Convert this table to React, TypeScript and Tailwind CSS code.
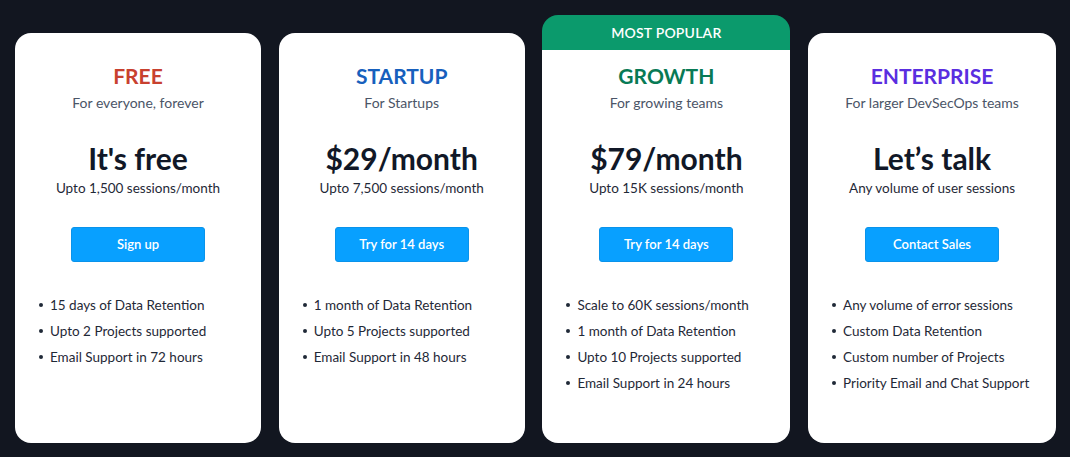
const plans = [
  {
    name: 'FREE',
    color: 'text-[#c8412f]',
    tagline: 'For everyone, forever',
    price: "It's free",
    sessions: 'Upto 1,500 sessions/month',
    cta: 'Sign up',
    features: ['15 days of Data Retention', 'Upto 2 Projects supported', 'Email Support in 72 hours'],
  },
  {
    name: 'STARTUP',
    color: 'text-[#1760bd]',
    tagline: 'For Startups',
    price: '$29/month',
    sessions: 'Upto 7,500 sessions/month',
    cta: 'Try for 14 days',
    features: ['1 month of Data Retention', 'Upto 5 Projects supported', 'Email Support in 48 hours'],
  },
  {
    name: 'GROWTH',
    color: 'text-[#087a55]',
    tagline: 'For growing teams',
    price: '$79/month',
    sessions: 'Upto 15K sessions/month',
    cta: 'Try for 14 days',
    popular: true,
    features: [
      'Scale to 60K sessions/month',
      '1 month of Data Retention',
      'Upto 10 Projects supported',
      'Email Support in 24 hours',
    ],
  },
  {
    name: 'ENTERPRISE',
    color: 'text-[#5a2ee0]',
    tagline: 'For larger DevSecOps teams',
    price: 'Let’s talk',
    sessions: 'Any volume of user sessions',
    cta: 'Contact Sales',
    features: [
      'Any volume of error sessions',
      'Custom Data Retention',
      'Custom number of Projects',
      'Priority Email and Chat Support',
    ],
  },
];

export default function App() {
  return (
    <div className="min-h-[457px] bg-[#121620] pt-[33px] pl-[15px] font-['Lato','Open_Sans',sans-serif]">
      <div className="grid grid-cols-[246px_246px_248px_248px] gap-[17.7px]">
        {plans.map((plan) => (
          <div key={plan.name} className="relative h-[410px] rounded-2xl bg-white">
            {plan.popular && (
              <div className="absolute left-0 right-0 top-[-18px] h-[35px] rounded-t-2xl bg-[#0b9a6c] flex items-center justify-center text-[14px] font-semibold text-white tracking-[0.2px]">
                MOST POPULAR
              </div>
            )}
            <div className="pt-[29px] flex flex-col items-center text-center">
              <div className={`text-[21px] leading-[28px] font-bold ${plan.color}`}>{plan.name}</div>
              <div className="mt-[3px] text-[14px] leading-[20px] text-[#4b5567]">{plan.tagline}</div>
              <div className="mt-[27px] text-[30px] leading-[36px] font-bold text-[#111827]">{plan.price}</div>
              <div className="mt-[2px] text-[13.5px] leading-[20px] text-[#1f2937]">{plan.sessions}</div>
              <button className="mt-[29px] w-[134px] h-[35px] rounded-[3px] bg-[#08a0ff] border border-[#0a93ea] text-[13px] font-semibold text-white">
                {plan.cta}
              </button>
            </div>
            <ul className="mt-[30px] pl-[24px]">
              {plan.features.map((f) => (
                <li key={f} className="flex items-center h-[26px] text-[13.5px] text-[#1f2937]">
                  <span className="w-[4px] h-[4px] rounded-full bg-[#1f2937] mr-[7px]" />
                  {f}
                </li>
              ))}
            </ul>
          </div>
        ))}
      </div>
    </div>
  );
}
